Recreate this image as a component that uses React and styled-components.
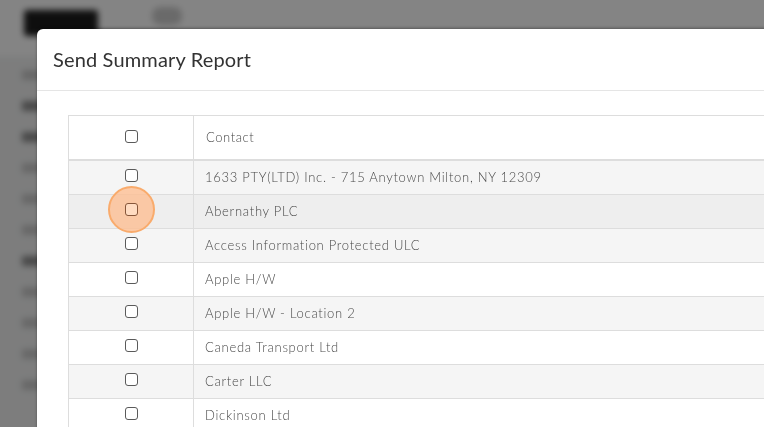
import React from "react";
import styled, { createGlobalStyle } from "styled-components";

const Global = createGlobalStyle`
  html, body { margin: 0; padding: 0; width: 100%; height: 100%; overflow: hidden; }
  body { font-family: Lato, "Open Sans", "Liberation Sans", sans-serif; background: #f2f2f2; }
`;

const Backdrop = styled.div`
  position: fixed;
  inset: -10px;
  filter: blur(3px);
  background: #eceded;
  display: flex;
  flex-direction: column;
`;

const TopBar = styled.div`
  height: 66px;
  flex: none;
  background: #fafafa;
  display: flex;
  align-items: center;
  padding: 0 0 0 34px;
  gap: 54px;
`;

const DarkButton = styled.div`
  width: 74px;
  height: 26px;
  border-radius: 3px;
  background: #1c1c1c;
`;

const Blob = styled.div`
  width: 30px;
  height: 18px;
  border-radius: 8px;
  background: #c8c8c8;
  margin-top: -14px;
`;

const TopLinks = styled.div`
  margin-left: auto;
  display: flex;
  gap: 20px;
  padding-right: 20px;
  margin-top: 36px;
`;

const Link = styled.div`
  width: ${p => p.$w}px;
  height: 8px;
  background: ${p => p.$c || "#b8c2dc"};
`;

const Side = styled.div`
  display: flex;
  flex-direction: column;
  padding: 14px 0 0 32px;
  gap: 21px;
`;

const SideItem = styled.div`
  width: 70px;
  height: 10px;
  background: ${p => (p.$dark ? "#8a8a8a" : "#c4c4c4")};
`;

const Overlay = styled.div`
  position: fixed;
  inset: 0;
  background: rgba(0, 0, 0, 0.47);
`;

const Modal = styled.div`
  position: fixed;
  top: 29px;
  left: 37px;
  width: 820px;
  height: 460px;
  background: #fff;
  border-radius: 6px 6px 0 0;
  box-shadow: 0 -1px 3px rgba(0, 0, 0, 0.35);
  display: flex;
  flex-direction: column;
`;

const Header = styled.div`
  height: 62px;
  box-sizing: border-box;
  border-bottom: 1px solid #e5e5e5;
  display: flex;
  align-items: center;
  padding: 0 16px;
  flex: none;
`;

const Title = styled.h4`
  margin: 0 0 2px;
  font-size: 20px;
  font-weight: 400;
  color: #333;
  letter-spacing: 0.15px;
`;

const Body = styled.div`
  padding: 24px 31px;
`;

const Table = styled.table`
  border-collapse: collapse;
  width: 760px;
  font-size: 13px;
  font-weight: 300;
  color: #4a4a4a;
  border: 1px solid #dddddd;
`;

const Th = styled.th`
  height: 44px;
  font-weight: 300;
  text-align: ${p => (p.$center ? "center" : "left")};
  padding: 0 12px;
  border-left: 1px solid #dddddd;
  border-bottom: 2px solid #dddddd;
  width: ${p => (p.$w ? `${p.$w}px` : "auto")};
  box-sizing: border-box;
  vertical-align: middle;
  letter-spacing: 0.55px;
`;

const Tr = styled.tr`
  background: ${p => (p.$hover ? "#eeeeee" : p.$odd ? "#f5f5f5" : "#ffffff")};
`;

const Td = styled.td`
  height: 33px;
  padding: 0 11px;
  border-left: 1px solid #dddddd;
  border-top: 1px solid #dddddd;
  text-align: ${p => (p.$center ? "center" : "left")};
  vertical-align: middle;
  letter-spacing: 0.72px;
`;

const CheckWrap = styled.span`
  position: relative;
  display: inline-flex;
  width: 13px;
  height: 13px;
  vertical-align: middle;
  margin-top: -6px;
`;

const Box = styled.span`
  position: relative;
  z-index: 1;
  width: 13px;
  height: 13px;
  box-sizing: border-box;
  border: 1px solid ${p => (p.$tint ? "#86563a" : "#5a5a5a")};
  border-radius: 3px;
  background: ${p => (p.$tint ? "#ffdcc2" : "#fff")};
`;

const Highlight = styled.span`
  position: absolute;
  left: 50%;
  top: 50%;
  width: 47px;
  height: 47px;
  margin: -23.5px 0 0 -23.5px;
  border-radius: 50%;
  box-sizing: border-box;
  border: 2px solid #f9ab6c;
  background: rgba(254, 190, 145, 0.78);
`;

const Check = ({ highlight }) => (
  <CheckWrap>
    {highlight && <Highlight />}
    <Box $tint={highlight} />
  </CheckWrap>
);

const rows = [
  "1633 PTY(LTD) Inc. - 715 Anytown Milton, NY 12309",
  "Abernathy PLC",
  "Access Information Protected ULC",
  "Apple H/W",
  "Apple H/W - Location 2",
  "Caneda Transport Ltd",
  "Carter LLC",
  "Dickinson Ltd",
];

export default function App() {
  return (
    <>
      <Global />
      <Backdrop>
        <TopBar>
          <DarkButton />
          <Blob />
          <TopLinks>
            <Link $w={90} />
            <Link $w={110} />
            <Link $w={40} $c="#9a9a9a" />
            <Link $w={60} $c="#a8a8a8" />
          </TopLinks>
        </TopBar>
        <Side>
          {[0, 1, 1, 0, 0, 0, 1, 0, 0, 0, 0].map((d, i) => (
            <SideItem key={i} $dark={d} />
          ))}
        </Side>
      </Backdrop>
      <Overlay />
      <Modal>
        <Header>
          <Title>Send Summary Report</Title>
        </Header>
        <Body>
          <Table>
            <thead>
              <tr>
                <Th $center $w={125}>
                  <Check />
                </Th>
                <Th>Contact</Th>
              </tr>
            </thead>
            <tbody>
              {rows.map((r, i) => (
                <Tr key={r} $odd={i % 2 === 0} $hover={i === 1}>
                  <Td $center>
                    <Check highlight={i === 1} />
                  </Td>
                  <Td>{r}</Td>
                </Tr>
              ))}
            </tbody>
          </Table>
        </Body>
      </Modal>
    </>
  );
}
